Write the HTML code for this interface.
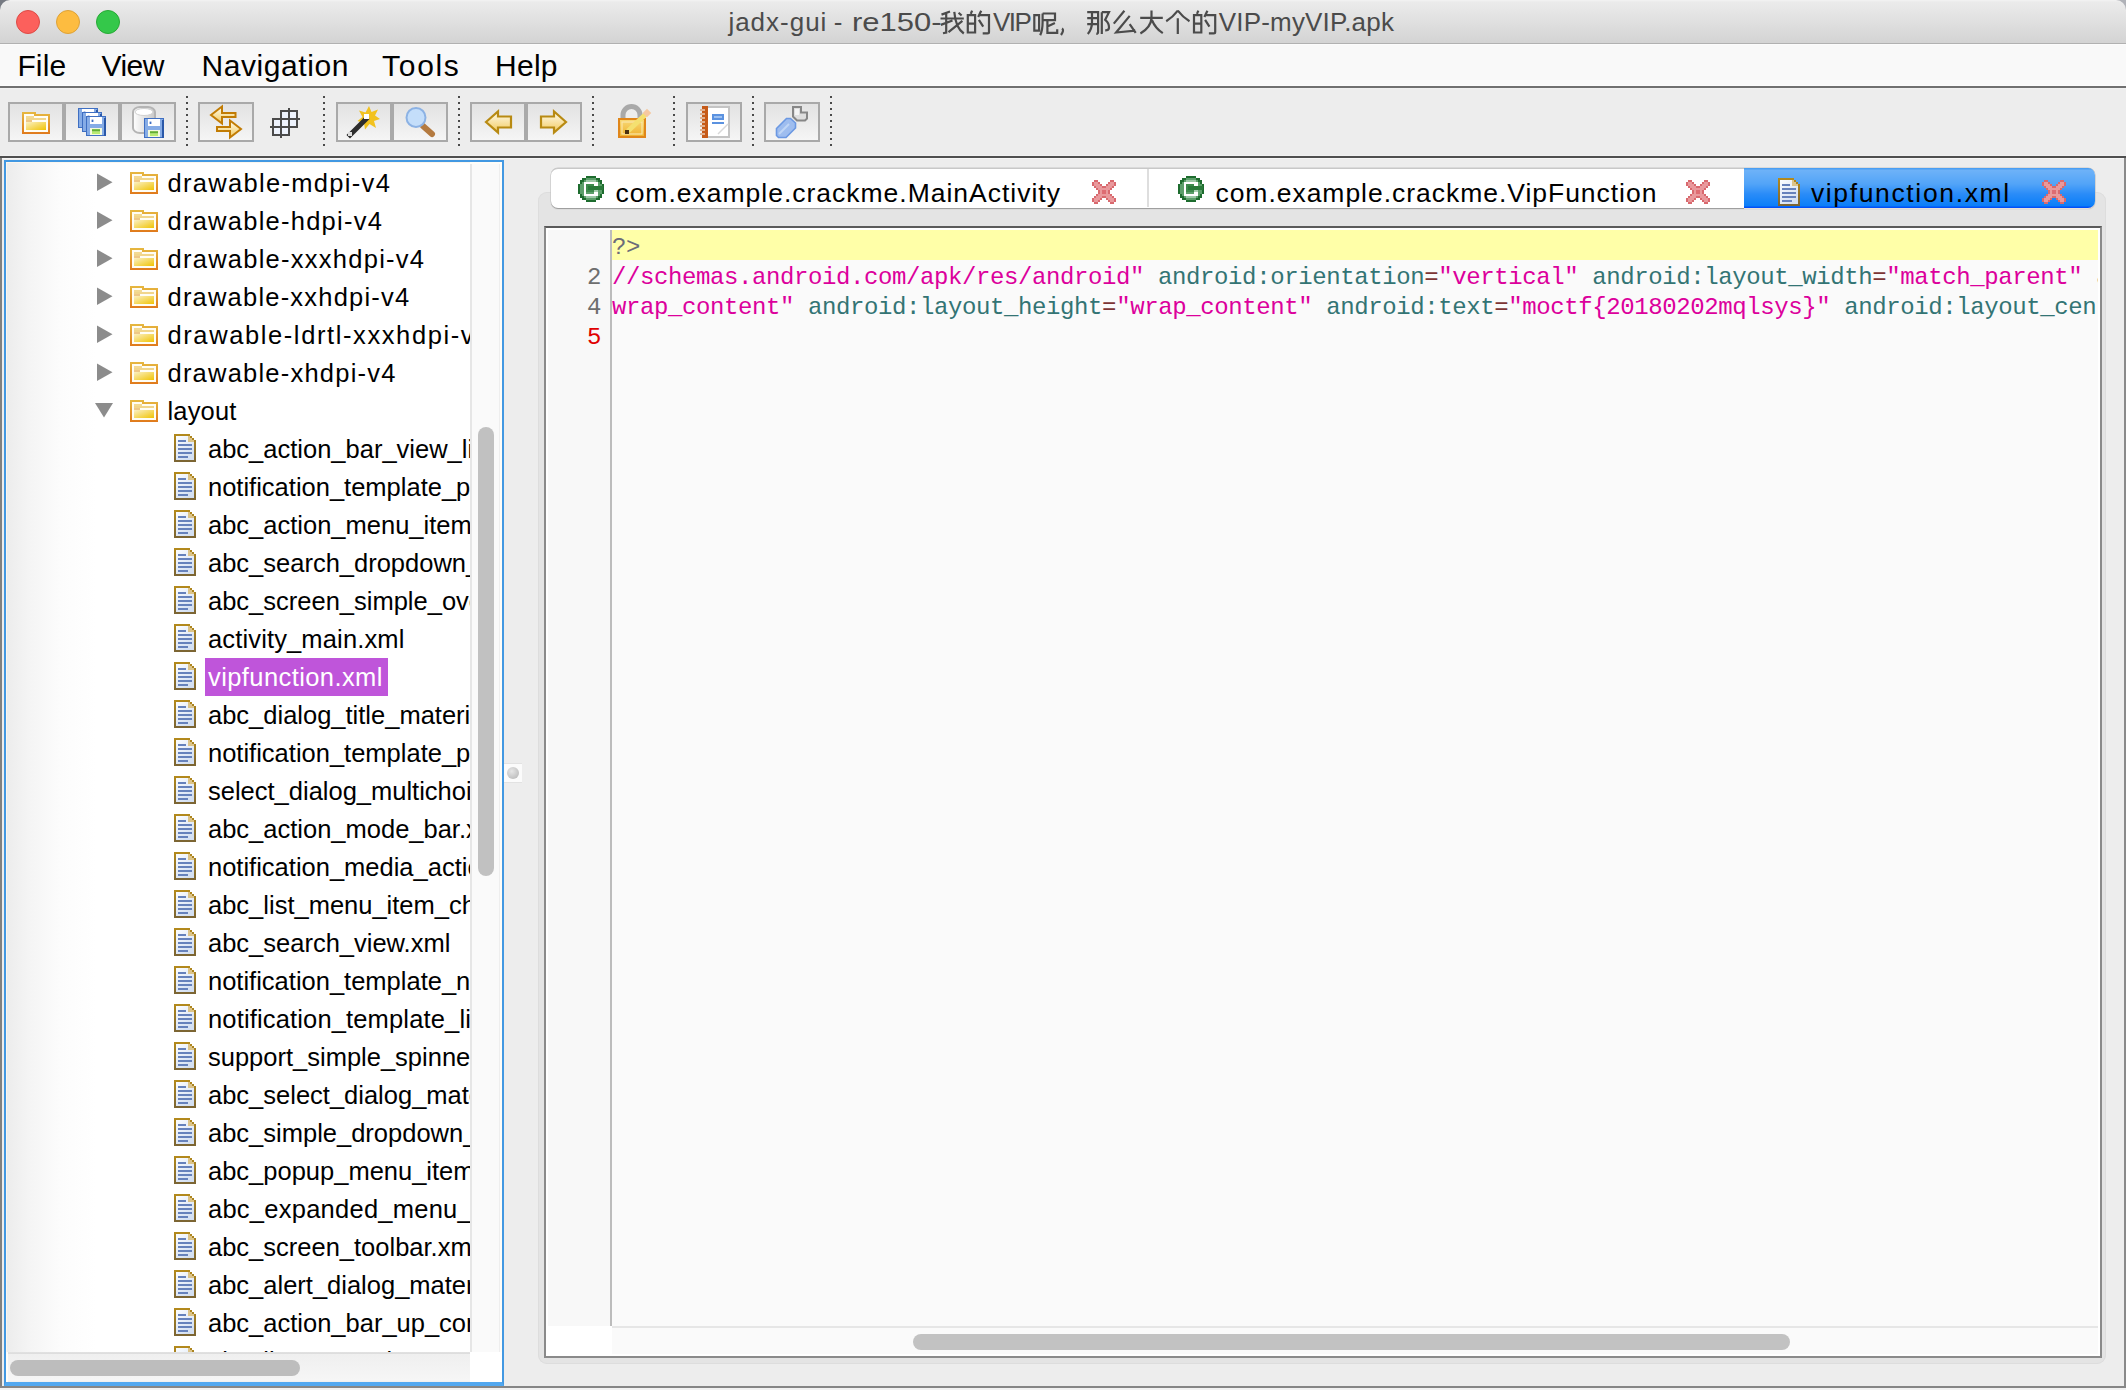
<!DOCTYPE html>
<html><head><meta charset="utf-8"><title>jadx-gui</title>
<style>
html,body{margin:0;padding:0;}
body{width:2126px;height:1390px;overflow:hidden;position:relative;background:#ececec;font-family:"Liberation Sans",sans-serif;}
.b{position:absolute;}
.t{position:absolute;white-space:pre;font-family:"Liberation Sans",sans-serif;}
</style></head><body>
<div class="b" style="left:0px;top:0px;width:2126px;height:44px;background:linear-gradient(#f3f3f3 0px,#ebebeb 2px,#d4d4d4 42px);"></div><div class="b" style="left:0px;top:43px;width:2126px;height:1px;background:#b1b1b1;"></div><svg class="b" style="left:0;top:0" width="12" height="12"><path d="M0 0H10A10 10 0 0 0 0 10Z" fill="#767a82"/></svg><svg class="b" style="left:2114px;top:0" width="12" height="12"><path d="M2 0H12V10A10 10 0 0 0 2 0Z" fill="#b0b2b8"/></svg><svg class="b" style="left:15px;top:9px" width="26" height="26"><circle cx="13" cy="13" r="11.5" fill="#fc605c" stroke="#de4a45" stroke-width="1"/></svg><svg class="b" style="left:55px;top:9px" width="26" height="26"><circle cx="13" cy="13" r="11.5" fill="#fdbc40" stroke="#dea236" stroke-width="1"/></svg><svg class="b" style="left:95px;top:9px" width="26" height="26"><circle cx="13" cy="13" r="11.5" fill="#34c84a" stroke="#27aa35" stroke-width="1"/></svg><div class="b" style="left:0px;top:44px;width:2126px;height:42px;background:linear-gradient(#ffffff 0px,#f9f9f9 1px,#f9f9f9 41px,#ffffff 42px);"></div><div class="b" style="left:0px;top:86px;width:2126px;height:2px;background:#707070;"></div><div class="b" style="left:0px;top:88px;width:2126px;height:68px;background:linear-gradient(#f4f4f4 0px,#ededed 1px,#ededed 67px,#f6f6f6 68px);"></div><div class="b" style="left:0px;top:156px;width:2126px;height:2px;background:#4f4f4f;"></div><div class="b" style="left:0px;top:158px;width:2126px;height:1px;background:#f6f6f6;"></div><div class="b" style="left:0px;top:159px;width:2126px;height:1227px;background:#ededed;"></div><div class="b" style="left:0px;top:158px;width:2px;height:1230px;background:#808080;"></div><div class="b" style="left:2124px;top:158px;width:2px;height:1230px;background:#8a8a8a;"></div><div class="b" style="left:0px;top:1386px;width:2126px;height:2px;background:#868686;"></div><div class="b" style="left:0px;top:1388px;width:2126px;height:2px;background:#f2f2f2;"></div><div class="t" style="left:17.40px;top:50.61px;font-size:30px;line-height:30px;color:#000;letter-spacing:0.130px;font-family:'Liberation Sans', sans-serif;">File</div><div class="t" style="left:101.40px;top:50.61px;font-size:30px;line-height:30px;color:#000;letter-spacing:-0.460px;font-family:'Liberation Sans', sans-serif;">View</div><div class="t" style="left:201.40px;top:50.61px;font-size:30px;line-height:30px;color:#000;letter-spacing:0.600px;font-family:'Liberation Sans', sans-serif;">Navigation</div><div class="t" style="left:382.10px;top:50.61px;font-size:30px;line-height:30px;color:#000;letter-spacing:1.680px;font-family:'Liberation Sans', sans-serif;">Tools</div><div class="t" style="left:495.00px;top:50.61px;font-size:30px;line-height:30px;color:#000;letter-spacing:0.270px;font-family:'Liberation Sans', sans-serif;">Help</div><div class="b" style="left:8px;top:102px;width:56px;height:40px;box-sizing:border-box;border:2px solid #a9a9a9;background:linear-gradient(#e2e2e2,#f5f5f5);"></div><div class="b" style="left:64px;top:102px;width:56px;height:40px;box-sizing:border-box;border:2px solid #a9a9a9;background:linear-gradient(#e2e2e2,#f5f5f5);"></div><div class="b" style="left:120px;top:102px;width:56px;height:40px;box-sizing:border-box;border:2px solid #a9a9a9;background:linear-gradient(#e2e2e2,#f5f5f5);"></div><div class="b" style="left:198px;top:102px;width:56px;height:40px;box-sizing:border-box;border:2px solid #a9a9a9;background:linear-gradient(#e2e2e2,#f5f5f5);"></div><div class="b" style="left:336px;top:102px;width:56px;height:40px;box-sizing:border-box;border:2px solid #a9a9a9;background:linear-gradient(#e2e2e2,#f5f5f5);"></div><div class="b" style="left:392px;top:102px;width:56px;height:40px;box-sizing:border-box;border:2px solid #a9a9a9;background:linear-gradient(#e2e2e2,#f5f5f5);"></div><div class="b" style="left:470px;top:102px;width:56px;height:40px;box-sizing:border-box;border:2px solid #a9a9a9;background:linear-gradient(#e2e2e2,#f5f5f5);"></div><div class="b" style="left:526px;top:102px;width:56px;height:40px;box-sizing:border-box;border:2px solid #a9a9a9;background:linear-gradient(#e2e2e2,#f5f5f5);"></div><div class="b" style="left:686px;top:102px;width:56px;height:40px;box-sizing:border-box;border:2px solid #a9a9a9;background:linear-gradient(#e2e2e2,#f5f5f5);"></div><div class="b" style="left:764px;top:102px;width:56px;height:40px;box-sizing:border-box;border:2px solid #a9a9a9;background:linear-gradient(#e2e2e2,#f5f5f5);"></div><svg class="b" style="left:186px;top:96px" width="2" height="50"><g fill="#4a4a4a"><rect x="0" y="0" width="2" height="2"/><rect x="0" y="6" width="2" height="2"/><rect x="0" y="12" width="2" height="2"/><rect x="0" y="18" width="2" height="2"/><rect x="0" y="24" width="2" height="2"/><rect x="0" y="30" width="2" height="2"/><rect x="0" y="36" width="2" height="2"/><rect x="0" y="42" width="2" height="2"/><rect x="0" y="48" width="2" height="2"/></g></svg><svg class="b" style="left:323px;top:96px" width="2" height="50"><g fill="#4a4a4a"><rect x="0" y="0" width="2" height="2"/><rect x="0" y="6" width="2" height="2"/><rect x="0" y="12" width="2" height="2"/><rect x="0" y="18" width="2" height="2"/><rect x="0" y="24" width="2" height="2"/><rect x="0" y="30" width="2" height="2"/><rect x="0" y="36" width="2" height="2"/><rect x="0" y="42" width="2" height="2"/><rect x="0" y="48" width="2" height="2"/></g></svg><svg class="b" style="left:458px;top:96px" width="2" height="50"><g fill="#4a4a4a"><rect x="0" y="0" width="2" height="2"/><rect x="0" y="6" width="2" height="2"/><rect x="0" y="12" width="2" height="2"/><rect x="0" y="18" width="2" height="2"/><rect x="0" y="24" width="2" height="2"/><rect x="0" y="30" width="2" height="2"/><rect x="0" y="36" width="2" height="2"/><rect x="0" y="42" width="2" height="2"/><rect x="0" y="48" width="2" height="2"/></g></svg><svg class="b" style="left:592px;top:96px" width="2" height="50"><g fill="#4a4a4a"><rect x="0" y="0" width="2" height="2"/><rect x="0" y="6" width="2" height="2"/><rect x="0" y="12" width="2" height="2"/><rect x="0" y="18" width="2" height="2"/><rect x="0" y="24" width="2" height="2"/><rect x="0" y="30" width="2" height="2"/><rect x="0" y="36" width="2" height="2"/><rect x="0" y="42" width="2" height="2"/><rect x="0" y="48" width="2" height="2"/></g></svg><svg class="b" style="left:673px;top:96px" width="2" height="50"><g fill="#4a4a4a"><rect x="0" y="0" width="2" height="2"/><rect x="0" y="6" width="2" height="2"/><rect x="0" y="12" width="2" height="2"/><rect x="0" y="18" width="2" height="2"/><rect x="0" y="24" width="2" height="2"/><rect x="0" y="30" width="2" height="2"/><rect x="0" y="36" width="2" height="2"/><rect x="0" y="42" width="2" height="2"/><rect x="0" y="48" width="2" height="2"/></g></svg><svg class="b" style="left:752px;top:96px" width="2" height="50"><g fill="#4a4a4a"><rect x="0" y="0" width="2" height="2"/><rect x="0" y="6" width="2" height="2"/><rect x="0" y="12" width="2" height="2"/><rect x="0" y="18" width="2" height="2"/><rect x="0" y="24" width="2" height="2"/><rect x="0" y="30" width="2" height="2"/><rect x="0" y="36" width="2" height="2"/><rect x="0" y="42" width="2" height="2"/><rect x="0" y="48" width="2" height="2"/></g></svg><svg class="b" style="left:830px;top:96px" width="2" height="50"><g fill="#4a4a4a"><rect x="0" y="0" width="2" height="2"/><rect x="0" y="6" width="2" height="2"/><rect x="0" y="12" width="2" height="2"/><rect x="0" y="18" width="2" height="2"/><rect x="0" y="24" width="2" height="2"/><rect x="0" y="30" width="2" height="2"/><rect x="0" y="36" width="2" height="2"/><rect x="0" y="42" width="2" height="2"/><rect x="0" y="48" width="2" height="2"/></g></svg><div class="b" style="left:4px;top:160px;width:500px;height:1226px;box-sizing:border-box;border:2px solid #4298e2;border-bottom:4px solid #52a8f0;background:#fffdf8;"></div><div class="b" style="left:6px;top:162px;width:464px;height:1190px;background:linear-gradient(to right,#ececec 0px,#f5f5f5 25px,#fcfcfc 55px,#ffffff 90px);box-shadow:inset 1px 1px 0 #fbf6ee;"></div><div class="b" style="left:470px;top:164px;width:30px;height:1188px;background:#fafafa;border-left:2px solid #e6e6e6;box-sizing:border-box;border-right:1px solid #eeeeee;"></div><div class="b" style="left:478px;top:427px;width:16px;height:449px;background:#c1c1c1;border-radius:8px;"></div><div class="b" style="left:8px;top:1352px;width:462px;height:30px;background:linear-gradient(#e2e2e2 0px,#dcdcdc 2px,#efefef 2px,#f6f6f6 28px,#eeeeee 30px);"></div><div class="b" style="left:10px;top:1360px;width:290px;height:16px;background:#bdbdbd;border-radius:8px;"></div><div class="b" style="left:470px;top:1352px;width:32px;height:30px;background:#ffffff;"></div><div class="b" style="left:8px;top:164px;width:462px;height:1188px;overflow:hidden"><div class="b" style="left:-8px;top:-164px;width:600px;height:1400px"><div class="t" style="left:167.50px;top:171.41px;font-size:25.5px;line-height:25.5px;color:#000000;letter-spacing:1.31px">drawable-mdpi-v4</div><div class="t" style="left:167.50px;top:209.41px;font-size:25.5px;line-height:25.5px;color:#000000;letter-spacing:1.25px">drawable-hdpi-v4</div><div class="t" style="left:167.50px;top:247.41px;font-size:25.5px;line-height:25.5px;color:#000000;letter-spacing:1.26px">drawable-xxxhdpi-v4</div><div class="t" style="left:167.50px;top:285.41px;font-size:25.5px;line-height:25.5px;color:#000000;letter-spacing:1.21px">drawable-xxhdpi-v4</div><div class="t" style="left:167.50px;top:323.41px;font-size:25.5px;line-height:25.5px;color:#000000;letter-spacing:1.6px">drawable-ldrtl-xxxhdpi-v4</div><div class="t" style="left:167.50px;top:361.41px;font-size:25.5px;line-height:25.5px;color:#000000;letter-spacing:1.22px">drawable-xhdpi-v4</div><div class="t" style="left:167.50px;top:399.41px;font-size:25.5px;line-height:25.5px;color:#000000;letter-spacing:0.16px">layout</div><div class="t" style="left:208.00px;top:437.41px;font-size:25.5px;line-height:25.5px;color:#000000;letter-spacing:0.0px">abc_action_bar_view_list_nav_layout.xml</div><div class="t" style="left:208.00px;top:475.41px;font-size:25.5px;line-height:25.5px;color:#000000;letter-spacing:0.0px">notification_template_part_chronometer.xml</div><div class="t" style="left:208.00px;top:513.41px;font-size:25.5px;line-height:25.5px;color:#000000;letter-spacing:0.0px">abc_action_menu_item_layout.xml</div><div class="t" style="left:208.00px;top:551.41px;font-size:25.5px;line-height:25.5px;color:#000000;letter-spacing:0.0px">abc_search_dropdown_item_icons_2line.xml</div><div class="t" style="left:208.00px;top:589.41px;font-size:25.5px;line-height:25.5px;color:#000000;letter-spacing:0.0px">abc_screen_simple_overlay_action_mode.xml</div><div class="t" style="left:208.00px;top:627.41px;font-size:25.5px;line-height:25.5px;color:#000000;letter-spacing:0.14px">activity_main.xml</div><div class="b" style="left:205px;top:658px;width:183px;height:38px;background:#bf55da;"></div><div class="t" style="left:208.00px;top:665.41px;font-size:25.5px;line-height:25.5px;color:#ffffff;letter-spacing:0.41px">vipfunction.xml</div><div class="t" style="left:208.00px;top:703.41px;font-size:25.5px;line-height:25.5px;color:#000000;letter-spacing:0.0px">abc_dialog_title_material.xml</div><div class="t" style="left:208.00px;top:741.41px;font-size:25.5px;line-height:25.5px;color:#000000;letter-spacing:0.0px">notification_template_part_time.xml</div><div class="t" style="left:208.00px;top:779.41px;font-size:25.5px;line-height:25.5px;color:#000000;letter-spacing:0.0px">select_dialog_multichoice_material.xml</div><div class="t" style="left:208.00px;top:817.41px;font-size:25.5px;line-height:25.5px;color:#000000;letter-spacing:0.0px">abc_action_mode_bar.xml</div><div class="t" style="left:208.00px;top:855.41px;font-size:25.5px;line-height:25.5px;color:#000000;letter-spacing:0.0px">notification_media_action.xml</div><div class="t" style="left:208.00px;top:893.41px;font-size:25.5px;line-height:25.5px;color:#000000;letter-spacing:0.0px">abc_list_menu_item_checkbox.xml</div><div class="t" style="left:208.00px;top:931.41px;font-size:25.5px;line-height:25.5px;color:#000000;letter-spacing:0.0px">abc_search_view.xml</div><div class="t" style="left:208.00px;top:969.41px;font-size:25.5px;line-height:25.5px;color:#000000;letter-spacing:0.0px">notification_template_narrow.xml</div><div class="t" style="left:208.00px;top:1007.41px;font-size:25.5px;line-height:25.5px;color:#000000;letter-spacing:0.15px">notification_template_lines_media.xml</div><div class="t" style="left:208.00px;top:1045.41px;font-size:25.5px;line-height:25.5px;color:#000000;letter-spacing:0.0px">support_simple_spinner_dropdown_item.xml</div><div class="t" style="left:208.00px;top:1083.41px;font-size:25.5px;line-height:25.5px;color:#000000;letter-spacing:0.0px">abc_select_dialog_material.xml</div><div class="t" style="left:208.00px;top:1121.41px;font-size:25.5px;line-height:25.5px;color:#000000;letter-spacing:0.0px">abc_simple_dropdown_hint.xml</div><div class="t" style="left:208.00px;top:1159.41px;font-size:25.5px;line-height:25.5px;color:#000000;letter-spacing:0.0px">abc_popup_menu_item_layout.xml</div><div class="t" style="left:208.00px;top:1197.41px;font-size:25.5px;line-height:25.5px;color:#000000;letter-spacing:0.25px">abc_expanded_menu_layout.xml</div><div class="t" style="left:208.00px;top:1235.41px;font-size:25.5px;line-height:25.5px;color:#000000;letter-spacing:0.0px">abc_screen_toolbar.xml</div><div class="t" style="left:208.00px;top:1273.41px;font-size:25.5px;line-height:25.5px;color:#000000;letter-spacing:0.0px">abc_alert_dialog_material.xml</div><div class="t" style="left:208.00px;top:1311.41px;font-size:25.5px;line-height:25.5px;color:#000000;letter-spacing:0.0px">abc_action_bar_up_container.xml</div><div class="t" style="left:208.00px;top:1349.41px;font-size:25.5px;line-height:25.5px;color:#000000;letter-spacing:0.0px">abc_list_menu_item_radio.xml</div></div><svg class="b" style="left:-8px;top:-164px" width="600" height="1400"><path d="M97 173.5L112.5 182.2L97 191Z" fill="#8c8c8c"/><use href="#folder" x="130" y="172" width="28" height="22"/><path d="M97 211.5L112.5 220.2L97 229Z" fill="#8c8c8c"/><use href="#folder" x="130" y="210" width="28" height="22"/><path d="M97 249.5L112.5 258.2L97 267Z" fill="#8c8c8c"/><use href="#folder" x="130" y="248" width="28" height="22"/><path d="M97 287.5L112.5 296.2L97 305Z" fill="#8c8c8c"/><use href="#folder" x="130" y="286" width="28" height="22"/><path d="M97 325.5L112.5 334.2L97 343Z" fill="#8c8c8c"/><use href="#folder" x="130" y="324" width="28" height="22"/><path d="M97 363.5L112.5 372.2L97 381Z" fill="#8c8c8c"/><use href="#folder" x="130" y="362" width="28" height="22"/><path d="M95 403H113L104 417.5Z" fill="#8c8c8c"/><use href="#folder" x="130" y="400" width="28" height="22"/><use href="#file" x="174" y="434" width="22" height="28"/><use href="#file" x="174" y="472" width="22" height="28"/><use href="#file" x="174" y="510" width="22" height="28"/><use href="#file" x="174" y="548" width="22" height="28"/><use href="#file" x="174" y="586" width="22" height="28"/><use href="#file" x="174" y="624" width="22" height="28"/><use href="#file" x="174" y="662" width="22" height="28"/><use href="#file" x="174" y="700" width="22" height="28"/><use href="#file" x="174" y="738" width="22" height="28"/><use href="#file" x="174" y="776" width="22" height="28"/><use href="#file" x="174" y="814" width="22" height="28"/><use href="#file" x="174" y="852" width="22" height="28"/><use href="#file" x="174" y="890" width="22" height="28"/><use href="#file" x="174" y="928" width="22" height="28"/><use href="#file" x="174" y="966" width="22" height="28"/><use href="#file" x="174" y="1004" width="22" height="28"/><use href="#file" x="174" y="1042" width="22" height="28"/><use href="#file" x="174" y="1080" width="22" height="28"/><use href="#file" x="174" y="1118" width="22" height="28"/><use href="#file" x="174" y="1156" width="22" height="28"/><use href="#file" x="174" y="1194" width="22" height="28"/><use href="#file" x="174" y="1232" width="22" height="28"/><use href="#file" x="174" y="1270" width="22" height="28"/><use href="#file" x="174" y="1308" width="22" height="28"/><use href="#file" x="174" y="1346" width="22" height="28"/></svg></div><div class="b" style="left:504px;top:763px;width:18px;height:20px;background:#fbfbfb;border-top:1px solid #e2e2e2;border-bottom:1px solid #e2e2e2;box-sizing:border-box;"></div><div class="b" style="left:538px;top:192px;width:1568px;height:1172px;background:#e4e4e4;border-radius:9px;box-shadow:inset 0 0 0 1px #dddddd;"></div><div class="b" style="left:551px;top:168px;width:1544px;height:40px;background:#ffffff;border-radius:7px;box-sizing:border-box;border-top:1px solid #c8c8c8;box-shadow:0 1px 1px #9a9a9a, 0 0 0 0.5px #c8c8c8;"></div><div class="b" style="left:1147px;top:169px;width:2px;height:38px;background:#dedede;"></div><div class="b" style="left:1744px;top:168px;width:351px;height:40px;border-radius:0 7px 7px 0;background:linear-gradient(#4a9ef2 0px,#4a9ef2 1px,#6eb2f8 2px,#52a4f8 16px,#2a8cf8 26px,#0a7ef8 38px,#0050f8 39px,#0050f8 40px);box-shadow:0 1px 0 #e8e0d8;"></div><div class="t" style="left:615.41px;top:179.57px;font-size:26.5px;line-height:26.5px;color:#000;letter-spacing:0.990px;font-family:'Liberation Sans', sans-serif;">com.example.crackme.MainActivity</div><div class="t" style="left:1215.41px;top:179.57px;font-size:26.5px;line-height:26.5px;color:#000;letter-spacing:0.970px;font-family:'Liberation Sans', sans-serif;">com.example.crackme.VipFunction</div><div class="t" style="left:1810.91px;top:179.57px;font-size:26.5px;line-height:26.5px;color:#000;letter-spacing:1.640px;font-family:'Liberation Sans', sans-serif;">vipfunction.xml</div><div class="b" style="left:544px;top:226px;width:1558px;height:1132px;box-sizing:border-box;border-top:2px solid #5a5a5a;border-left:2px solid #8a8a8a;border-right:2px solid #8a8a8a;border-bottom:2px solid #8a8a8a;background:#ffffff;"></div><div class="b" style="left:548px;top:230px;width:1550px;height:1096px;background:#fafafa;"></div><div class="b" style="left:548px;top:230px;width:62px;height:1096px;background:#f8f8f8;"></div><div class="b" style="left:610px;top:230px;width:2px;height:1096px;background:#bcbcbc;"></div><div class="b" style="left:612px;top:230px;width:1486px;height:30px;background:#ffffa8;"></div><div class="b" style="left:548px;top:1326px;width:64px;height:30px;background:#ffffff;"></div><div class="b" style="left:612px;top:1326px;width:1486px;height:2px;background:#e6e6e6;"></div><div class="b" style="left:612px;top:1328px;width:1486px;height:26px;background:#fafafa;"></div><div class="b" style="left:913px;top:1334px;width:877px;height:16px;background:#c2c2c2;border-radius:8px;"></div><div class="b" style="left:2098px;top:1326px;width:2px;height:30px;background:#ffffff;"></div><div class="t" style="left:587.00px;top:265.61px;font-size:24px;line-height:24px;color:#6e6e6e;letter-spacing:0.000px;font-family:'Liberation Mono', monospace;">2</div><div class="t" style="left:587.00px;top:295.61px;font-size:24px;line-height:24px;color:#6e6e6e;letter-spacing:0.000px;font-family:'Liberation Mono', monospace;">4</div><div class="t" style="left:587.00px;top:325.61px;font-size:24px;line-height:24px;color:#e00000;letter-spacing:0.000px;font-family:'Liberation Mono', monospace;">5</div><div class="t" style="left:612px;top:235.61px;font-size:24px;line-height:24px;letter-spacing:-0.4px;font-family:'Liberation Mono', monospace;width:1486px;overflow:hidden"><span style="color:#6c6c78">?&gt;</span></div><div class="t" style="left:612px;top:265.61px;font-size:24px;line-height:24px;letter-spacing:-0.4px;font-family:'Liberation Mono', monospace;width:1486px;overflow:hidden"><span style="color:#dc009c">//schemas.android.com/apk/res/android&quot;</span><span style="color:#dc009c"> </span><span style="color:#337474">android:orientation</span><span style="color:#7c3434">=</span><span style="color:#dc009c">&quot;vertical&quot;</span><span style="color:#dc009c"> </span><span style="color:#337474">android:layout_width</span><span style="color:#7c3434">=</span><span style="color:#dc009c">&quot;match_parent&quot;</span><span style="color:#dc009c"> </span><span style="color:#337474">android:layout_height</span></div><div class="t" style="left:612px;top:295.61px;font-size:24px;line-height:24px;letter-spacing:-0.4px;font-family:'Liberation Mono', monospace;width:1486px;overflow:hidden"><span style="color:#dc009c">wrap_content&quot;</span><span style="color:#dc009c"> </span><span style="color:#337474">android:layout_height</span><span style="color:#7c3434">=</span><span style="color:#dc009c">&quot;wrap_content&quot;</span><span style="color:#dc009c"> </span><span style="color:#337474">android:text</span><span style="color:#7c3434">=</span><span style="color:#dc009c">&quot;moctf{20180202mqlsys}&quot;</span><span style="color:#dc009c"> </span><span style="color:#337474">android:layout_centerInParent</span></div><div class="t" style="left:728.40px;top:8.99px;font-size:26px;line-height:26px;color:#4b4b4b;letter-spacing:0.990px;font-family:'Liberation Sans', sans-serif;">jadx-gui</div><div class="t" style="left:833.80px;top:8.99px;font-size:26px;line-height:26px;color:#4b4b4b;letter-spacing:0.000px;font-family:'Liberation Sans', sans-serif;">-</div><div class="t" style="left:851.50px;top:8.99px;font-size:26px;line-height:26px;color:#4b4b4b;letter-spacing:0.000px;font-family:'Liberation Sans', sans-serif;transform:scaleX(1.19);transform-origin:0 0;">re150-</div><div class="t" style="left:993.00px;top:8.99px;font-size:26px;line-height:26px;color:#4b4b4b;letter-spacing:-1.500px;font-family:'Liberation Sans', sans-serif;">VIP</div><div class="t" style="left:1218.80px;top:8.99px;font-size:26px;line-height:26px;color:#4b4b4b;letter-spacing:0.180px;font-family:'Liberation Sans', sans-serif;">VIP-myVIP.apk</div><svg class="b" style="left:0;top:0" width="1400" height="44"><g fill="none" stroke="#4b4b4b" stroke-width="2.2"><path transform="translate(940 10.3)" d="M10 1.2L1.5 4.3M0.5 8.2H23.8M6.2 2.5V22.3L3 23M0.8 14.6L12.5 10.2M14.3 1.5C15 11 18 19 23.8 23.2M22.4 10.5L8.5 21.8M18.6 2.4L21.6 5.2"/><path transform="translate(967 10.3)" d="M5.1 0.4L3.8 3.6M0.8 4.9H8.1V22.2H0.8ZM0.8 13.4H8.1M14.2 0.4L11.2 6.7M11.9 4.9H22V21.6Q22 23 20.5 23H15.7M11.9 9.6L16.2 16.4"/><path transform="translate(1034 10.3)" d="M0.3 4.8H5.1V20.4H0.3ZM8.6 3.2H21V9.9H8.6M8.6 3.2V12Q8.6 20 6.2 25M20.9 12.8L13.4 16.2M13.4 10V22.6H23.2V19"/><path transform="translate(1086.8 10.3)" d="M0.4 1.9H11.3V21.8Q11.3 23.5 9.5 23.5M0.4 7.9H11.3M0.4 13.9H11.3M5.2 1.9V12Q5.2 19 1 23.6M15 1.9V23.7M15 1.9H22.2L18.4 9.5Q22.6 13 22.2 17.5Q22 20 18.4 20"/><path transform="translate(1113 10.3)" d="M11.4 0.4L0.8 13.3M16.7 5.6L3.1 22.2L22.3 20.3M16.7 13.9L22.7 22.5"/><path transform="translate(1139.8 10.3)" d="M0.4 7.5H23M11.7 0.3V7.6Q11.2 17 0.6 23.2M12.1 9.7Q15.5 18 23 22.9"/><path transform="translate(1165.8 10.3)" d="M12 0.4Q7 7 0.4 10.9M12 0.4Q17 7 23.7 10.9M12 7.9V23.7"/><path transform="translate(1193.2 10.3)" d="M5.1 0.4L3.8 3.6M0.8 4.9H8.1V22.2H0.8ZM0.8 13.4H8.1M14.2 0.4L11.2 6.7M11.9 4.9H22V21.6Q22 23 20.5 23H15.7M11.9 9.6L16.2 16.4"/><path d="M1062 28.5Q1064.5 30 1061 35"/></g></svg>
<svg class="b" style="left:0;top:0" width="2126" height="1390"><defs>
<linearGradient id="gGold" x1="0" y1="0" x2="0" y2="1"><stop offset="0" stop-color="#e6b840"/><stop offset="1" stop-color="#e07a1c"/></linearGradient>
<linearGradient id="gFold" x1="0" y1="0" x2="1" y2="1"><stop offset="0" stop-color="#fbf0c4"/><stop offset="1" stop-color="#f0c404"/></linearGradient>
<linearGradient id="gFileO" x1="0" y1="0" x2="0" y2="1"><stop offset="0" stop-color="#b48a1c"/><stop offset="1" stop-color="#7a6434"/></linearGradient>
<linearGradient id="gFileI" x1="0" y1="0" x2="0.6" y2="1"><stop offset="0" stop-color="#fbfdff"/><stop offset="1" stop-color="#d4e0f2"/></linearGradient>
<linearGradient id="gArrow" x1="0" y1="0" x2="0" y2="1"><stop offset="0" stop-color="#fffdf0"/><stop offset="1" stop-color="#f2c95c"/></linearGradient>
<linearGradient id="gCyl" x1="0" y1="0" x2="1" y2="0"><stop offset="0" stop-color="#ffffff"/><stop offset="1" stop-color="#c8c8c8"/></linearGradient>
<linearGradient id="gLock" x1="0" y1="0" x2="0" y2="1"><stop offset="0" stop-color="#f8da78"/><stop offset="1" stop-color="#eeb02c"/></linearGradient>
<radialGradient id="gKnob" cx="0.4" cy="0.35" r="0.7"><stop offset="0" stop-color="#e6e6e6"/><stop offset="1" stop-color="#bdbdbd"/></radialGradient>
<symbol id="folder" viewBox="0 0 14 11">
  <path d="M0 0H7V1H14V11H0Z" fill="url(#gGold)"/>
  <path d="M1 1H6V2H13V10H1Z" fill="#fffdf4"/>
  <rect x="2" y="2" width="4" height="1" fill="#f3da94"/>
  <rect x="2" y="3" width="10" height="1" fill="#f1d68c"/>
  <rect x="2" y="4" width="3" height="1" fill="#eec888"/>
  <rect x="2" y="5" width="10" height="4" fill="url(#gFold)"/>
</symbol>
<symbol id="file" viewBox="0 0 11 14">
  <path d="M0 0H8V1H9V2H10V3H11V14H0Z" fill="url(#gFileO)"/>
  <path d="M1 1H7V4H10V13H1Z" fill="url(#gFileI)"/>
  <path d="M7 1H8V2H9V3H10V4H7Z" fill="#dcc48a"/>
  <g fill="#6682bc"><rect x="2" y="3" width="4" height="1"/><rect x="2" y="5" width="7" height="1"/><rect x="2" y="7" width="7" height="1"/><rect x="2" y="9" width="7" height="1"/><rect x="2" y="11" width="5" height="1"/></g>
</symbol>
<symbol id="floppy" viewBox="0 0 10 10">
  <rect x="0" y="0" width="10" height="10" fill="#3f6fc2"/>
  <rect x="0.5" y="0.5" width="9" height="9" fill="#86ace6"/>
  <rect x="9" y="1" width="1" height="9" fill="#2a58a8"/>
  <rect x="2" y="0.5" width="6" height="3.5" fill="#ffffff"/>
  <rect x="2.8" y="1.8" width="0.9" height="1.2" fill="#3f6fc2"/>
  <rect x="2" y="6" width="6" height="3.5" fill="#f4fadc"/>
  <rect x="3" y="6.6" width="4" height="1.2" fill="#62b032"/>
  <rect x="3" y="7.8" width="4" height="1.2" fill="#b8ec70"/>
</symbol>
<symbol id="gicon" viewBox="0 0 13 13" shape-rendering="crispEdges">
  <path d="M4 0H9V1H11V2H12V4H13V9H12V11H11V12H9V13H4V12H2V11H1V9H0V4H1V2H2V1H4Z" fill="#1d6c2e"/>
  <path d="M4 1H9V2H10V3H11V4H12V9H11V10H10V11H9V12H4V11H3V10H2V9H1V4H2V3H3V2H4Z" fill="#5c9f6a"/>
  <path d="M4 2H9V3H4Z M4 10H9V11H4Z" fill="#9cc8a6"/>
  <path d="M3 3H10V5H8V4H4V9H8V8H10V10H3Z" fill="#ffffff"/>
  <rect x="4" y="4" width="4" height="4" fill="#3d8a4c"/>
  <rect x="5" y="5" width="7.5" height="2" fill="#2a7a3a"/>
  <rect x="8" y="7" width="2" height="1" fill="#a8d0b0"/>
</symbol>
<symbol id="closex" viewBox="0 0 12 12" shape-rendering="crispEdges"><rect x="1" y="0" width="1" height="1" fill="#d8696e"/><rect x="2" y="0" width="1" height="1" fill="#d8696e"/><rect x="9" y="0" width="1" height="1" fill="#d8696e"/><rect x="10" y="0" width="1" height="1" fill="#d8696e"/><rect x="0" y="1" width="1" height="1" fill="#d8696e"/><rect x="1" y="1" width="1" height="1" fill="#e9999c"/><rect x="2" y="1" width="1" height="1" fill="#e9999c"/><rect x="3" y="1" width="1" height="1" fill="#d8696e"/><rect x="8" y="1" width="1" height="1" fill="#d8696e"/><rect x="9" y="1" width="1" height="1" fill="#e9999c"/><rect x="10" y="1" width="1" height="1" fill="#e9999c"/><rect x="11" y="1" width="1" height="1" fill="#d8696e"/><rect x="0" y="2" width="1" height="1" fill="#d8696e"/><rect x="1" y="2" width="1" height="1" fill="#e9999c"/><rect x="2" y="2" width="1" height="1" fill="#e9999c"/><rect x="3" y="2" width="1" height="1" fill="#e9999c"/><rect x="4" y="2" width="1" height="1" fill="#d8696e"/><rect x="7" y="2" width="1" height="1" fill="#d8696e"/><rect x="8" y="2" width="1" height="1" fill="#e9999c"/><rect x="9" y="2" width="1" height="1" fill="#e9999c"/><rect x="10" y="2" width="1" height="1" fill="#e9999c"/><rect x="11" y="2" width="1" height="1" fill="#d8696e"/><rect x="1" y="3" width="1" height="1" fill="#d8696e"/><rect x="2" y="3" width="1" height="1" fill="#e9999c"/><rect x="3" y="3" width="1" height="1" fill="#e9999c"/><rect x="4" y="3" width="1" height="1" fill="#e9999c"/><rect x="5" y="3" width="1" height="1" fill="#d8696e"/><rect x="6" y="3" width="1" height="1" fill="#d8696e"/><rect x="7" y="3" width="1" height="1" fill="#e9999c"/><rect x="8" y="3" width="1" height="1" fill="#e9999c"/><rect x="9" y="3" width="1" height="1" fill="#e9999c"/><rect x="10" y="3" width="1" height="1" fill="#d8696e"/><rect x="2" y="4" width="1" height="1" fill="#d8696e"/><rect x="3" y="4" width="1" height="1" fill="#e9999c"/><rect x="4" y="4" width="1" height="1" fill="#e9999c"/><rect x="5" y="4" width="1" height="1" fill="#e9999c"/><rect x="6" y="4" width="1" height="1" fill="#e9999c"/><rect x="7" y="4" width="1" height="1" fill="#e9999c"/><rect x="8" y="4" width="1" height="1" fill="#e9999c"/><rect x="9" y="4" width="1" height="1" fill="#d8696e"/><rect x="3" y="5" width="1" height="1" fill="#d8696e"/><rect x="4" y="5" width="1" height="1" fill="#e9999c"/><rect x="5" y="5" width="1" height="1" fill="#de6c72"/><rect x="6" y="5" width="1" height="1" fill="#de6c72"/><rect x="7" y="5" width="1" height="1" fill="#e9999c"/><rect x="8" y="5" width="1" height="1" fill="#d8696e"/><rect x="3" y="6" width="1" height="1" fill="#d8696e"/><rect x="4" y="6" width="1" height="1" fill="#e9999c"/><rect x="5" y="6" width="1" height="1" fill="#de6c72"/><rect x="6" y="6" width="1" height="1" fill="#de6c72"/><rect x="7" y="6" width="1" height="1" fill="#e9999c"/><rect x="8" y="6" width="1" height="1" fill="#d8696e"/><rect x="2" y="7" width="1" height="1" fill="#d8696e"/><rect x="3" y="7" width="1" height="1" fill="#e9999c"/><rect x="4" y="7" width="1" height="1" fill="#e9999c"/><rect x="5" y="7" width="1" height="1" fill="#e9999c"/><rect x="6" y="7" width="1" height="1" fill="#e9999c"/><rect x="7" y="7" width="1" height="1" fill="#e9999c"/><rect x="8" y="7" width="1" height="1" fill="#e9999c"/><rect x="9" y="7" width="1" height="1" fill="#d8696e"/><rect x="1" y="8" width="1" height="1" fill="#d8696e"/><rect x="2" y="8" width="1" height="1" fill="#e9999c"/><rect x="3" y="8" width="1" height="1" fill="#e9999c"/><rect x="4" y="8" width="1" height="1" fill="#e9999c"/><rect x="5" y="8" width="1" height="1" fill="#d8696e"/><rect x="6" y="8" width="1" height="1" fill="#d8696e"/><rect x="7" y="8" width="1" height="1" fill="#e9999c"/><rect x="8" y="8" width="1" height="1" fill="#e9999c"/><rect x="9" y="8" width="1" height="1" fill="#e9999c"/><rect x="10" y="8" width="1" height="1" fill="#d8696e"/><rect x="0" y="9" width="1" height="1" fill="#d8696e"/><rect x="1" y="9" width="1" height="1" fill="#e9999c"/><rect x="2" y="9" width="1" height="1" fill="#e9999c"/><rect x="3" y="9" width="1" height="1" fill="#e9999c"/><rect x="4" y="9" width="1" height="1" fill="#d8696e"/><rect x="7" y="9" width="1" height="1" fill="#d8696e"/><rect x="8" y="9" width="1" height="1" fill="#e9999c"/><rect x="9" y="9" width="1" height="1" fill="#e9999c"/><rect x="10" y="9" width="1" height="1" fill="#e9999c"/><rect x="11" y="9" width="1" height="1" fill="#d8696e"/><rect x="0" y="10" width="1" height="1" fill="#d8696e"/><rect x="1" y="10" width="1" height="1" fill="#e9999c"/><rect x="2" y="10" width="1" height="1" fill="#e9999c"/><rect x="3" y="10" width="1" height="1" fill="#d8696e"/><rect x="8" y="10" width="1" height="1" fill="#d8696e"/><rect x="9" y="10" width="1" height="1" fill="#e9999c"/><rect x="10" y="10" width="1" height="1" fill="#e9999c"/><rect x="11" y="10" width="1" height="1" fill="#d8696e"/><rect x="1" y="11" width="1" height="1" fill="#d8696e"/><rect x="2" y="11" width="1" height="1" fill="#d8696e"/><rect x="9" y="11" width="1" height="1" fill="#d8696e"/><rect x="10" y="11" width="1" height="1" fill="#d8696e"/></symbol>
</defs><use href="#folder" x="22" y="112" width="28" height="22"/><use href="#floppy" x="78" y="108" width="20" height="20"/><use href="#floppy" x="82" y="112" width="20" height="20"/><use href="#floppy" x="86" y="116" width="20" height="20"/><rect x="133" y="107" width="22" height="26" rx="7" ry="5" fill="url(#gCyl)" stroke="#b4b4b4" stroke-width="2"/><ellipse cx="144" cy="112" rx="9" ry="3.5" fill="#ffffff" stroke="#d0d0d0" stroke-width="1"/><use href="#floppy" x="144" y="118" width="20" height="20"/><path d="M211 115L222 106.5V113H235.5V117H222V123.5Z" fill="url(#gArrow)" stroke="#c27c04" stroke-width="2" stroke-linejoin="miter"/><path d="M241 129L230 120.5V127H217V131H230V137.5Z" fill="url(#gArrow)" stroke="#c27c04" stroke-width="2" stroke-linejoin="miter"/><g fill="#eef3fd"><rect x="282" y="110" width="16" height="17"/><rect x="272" y="118" width="18" height="18"/></g><g fill="#4b4b4b"><rect x="280" y="110" width="2" height="9"/><rect x="296" y="110" width="2" height="18"/><rect x="280" y="110" width="18" height="2"/><rect x="288" y="108" width="2" height="10"/><rect x="288" y="118" width="12" height="2"/><rect x="288" y="126" width="10" height="2"/><rect x="272" y="118" width="18" height="2"/><rect x="272" y="118" width="2" height="18"/><rect x="272" y="134" width="18" height="2"/><rect x="288" y="118" width="2" height="18"/><rect x="280" y="116" width="2" height="22"/><rect x="270" y="126" width="22" height="2"/></g><path d="M369 106L371.5 112L378 109.5L375 115.5L380 119L374 121L376 128L369.5 124L365 129.5L364 123L357.5 121L362.5 117L359 110.5L365.5 112.5Z" fill="#f2c21e"/><line x1="350" y1="135" x2="366" y2="119" stroke="#2e2e2e" stroke-width="5" stroke-linecap="square"/><rect x="364" y="114" width="5" height="5" fill="#ffffff"/><rect x="348" y="132" width="4" height="4" fill="#dcdcdc"/><line x1="423" y1="126" x2="432" y2="134" stroke="#b47a40" stroke-width="6" stroke-linecap="round"/><circle cx="416" cy="117.5" r="9.5" fill="#c4defa" stroke="#8cb2e4" stroke-width="2"/><path d="M486 122L498 111.5V116.5H511V127.5H498V132.5Z" fill="url(#gArrow)" stroke="#b88a12" stroke-width="2.2"/><path d="M566 122L554 111.5V116.5H541V127.5H554V132.5Z" fill="url(#gArrow)" stroke="#b88a12" stroke-width="2.2"/><path d="M623 121V115A8.5 8.5 0 0 1 640 115V121" fill="none" stroke="#a9a9a9" stroke-width="5"/><rect x="619" y="119" width="26" height="18" fill="url(#gLock)" stroke="#e0861a" stroke-width="2"/><rect x="622" y="122" width="20" height="12" fill="none" stroke="#fbe6a8" stroke-width="1.2"/><line x1="628" y1="131" x2="646" y2="114" stroke="#f4e070" stroke-width="5"/><rect x="644" y="110" width="6" height="6" fill="#f6c8a0" transform="rotate(45 647 113)"/><rect x="625" y="130" width="4" height="4" fill="#4a3010"/><rect x="705" y="107" width="24" height="30" fill="#ffffff" stroke="#c4c4c4" stroke-width="2"/><rect x="702" y="106" width="6" height="32" fill="#c65a18"/><g fill="#e0b090"><rect x="700" y="109" width="5" height="2"/><rect x="700" y="113" width="5" height="2"/><rect x="700" y="117" width="5" height="2"/><rect x="700" y="121" width="5" height="2"/><rect x="700" y="125" width="5" height="2"/><rect x="700" y="129" width="5" height="2"/><rect x="700" y="133" width="5" height="2"/></g><rect x="712" y="114" width="12" height="6" fill="#5b92e0"/><rect x="714" y="116" width="8" height="2" fill="#9cc0f0"/><rect x="712" y="122" width="12" height="2" fill="#5b92e0"/><line x1="718" y1="134" x2="728" y2="124" stroke="#d8d8d8" stroke-width="1.5"/><path d="M776.5 128.5L786.5 118.5H790.5L795.5 123V128L786 137.5H778.5L776.5 135.5Z" fill="#9ebdef" stroke="#6b98e2" stroke-width="1.6"/><path d="M779 134L789 124" stroke="#c0d6f6" stroke-width="2"/><path d="M793 107H801V112.5H807V118.5L805 120.5H797L793 116.5Z" fill="#dedede" stroke="#878787" stroke-width="2"/><rect x="795" y="109" width="4" height="6" fill="#f4f4f4"/><circle cx="513" cy="773" r="6" fill="url(#gKnob)"/><use href="#gicon" x="578" y="176" width="26" height="26"/><use href="#gicon" x="1178" y="176" width="26" height="26"/><use href="#closex" x="1092" y="180" width="24" height="24"/><use href="#closex" x="1686" y="180" width="24" height="24"/><use href="#closex" x="2042" y="180" width="24" height="24"/><use href="#file" x="1778" y="178" width="22" height="28"/></svg>
</body></html>
